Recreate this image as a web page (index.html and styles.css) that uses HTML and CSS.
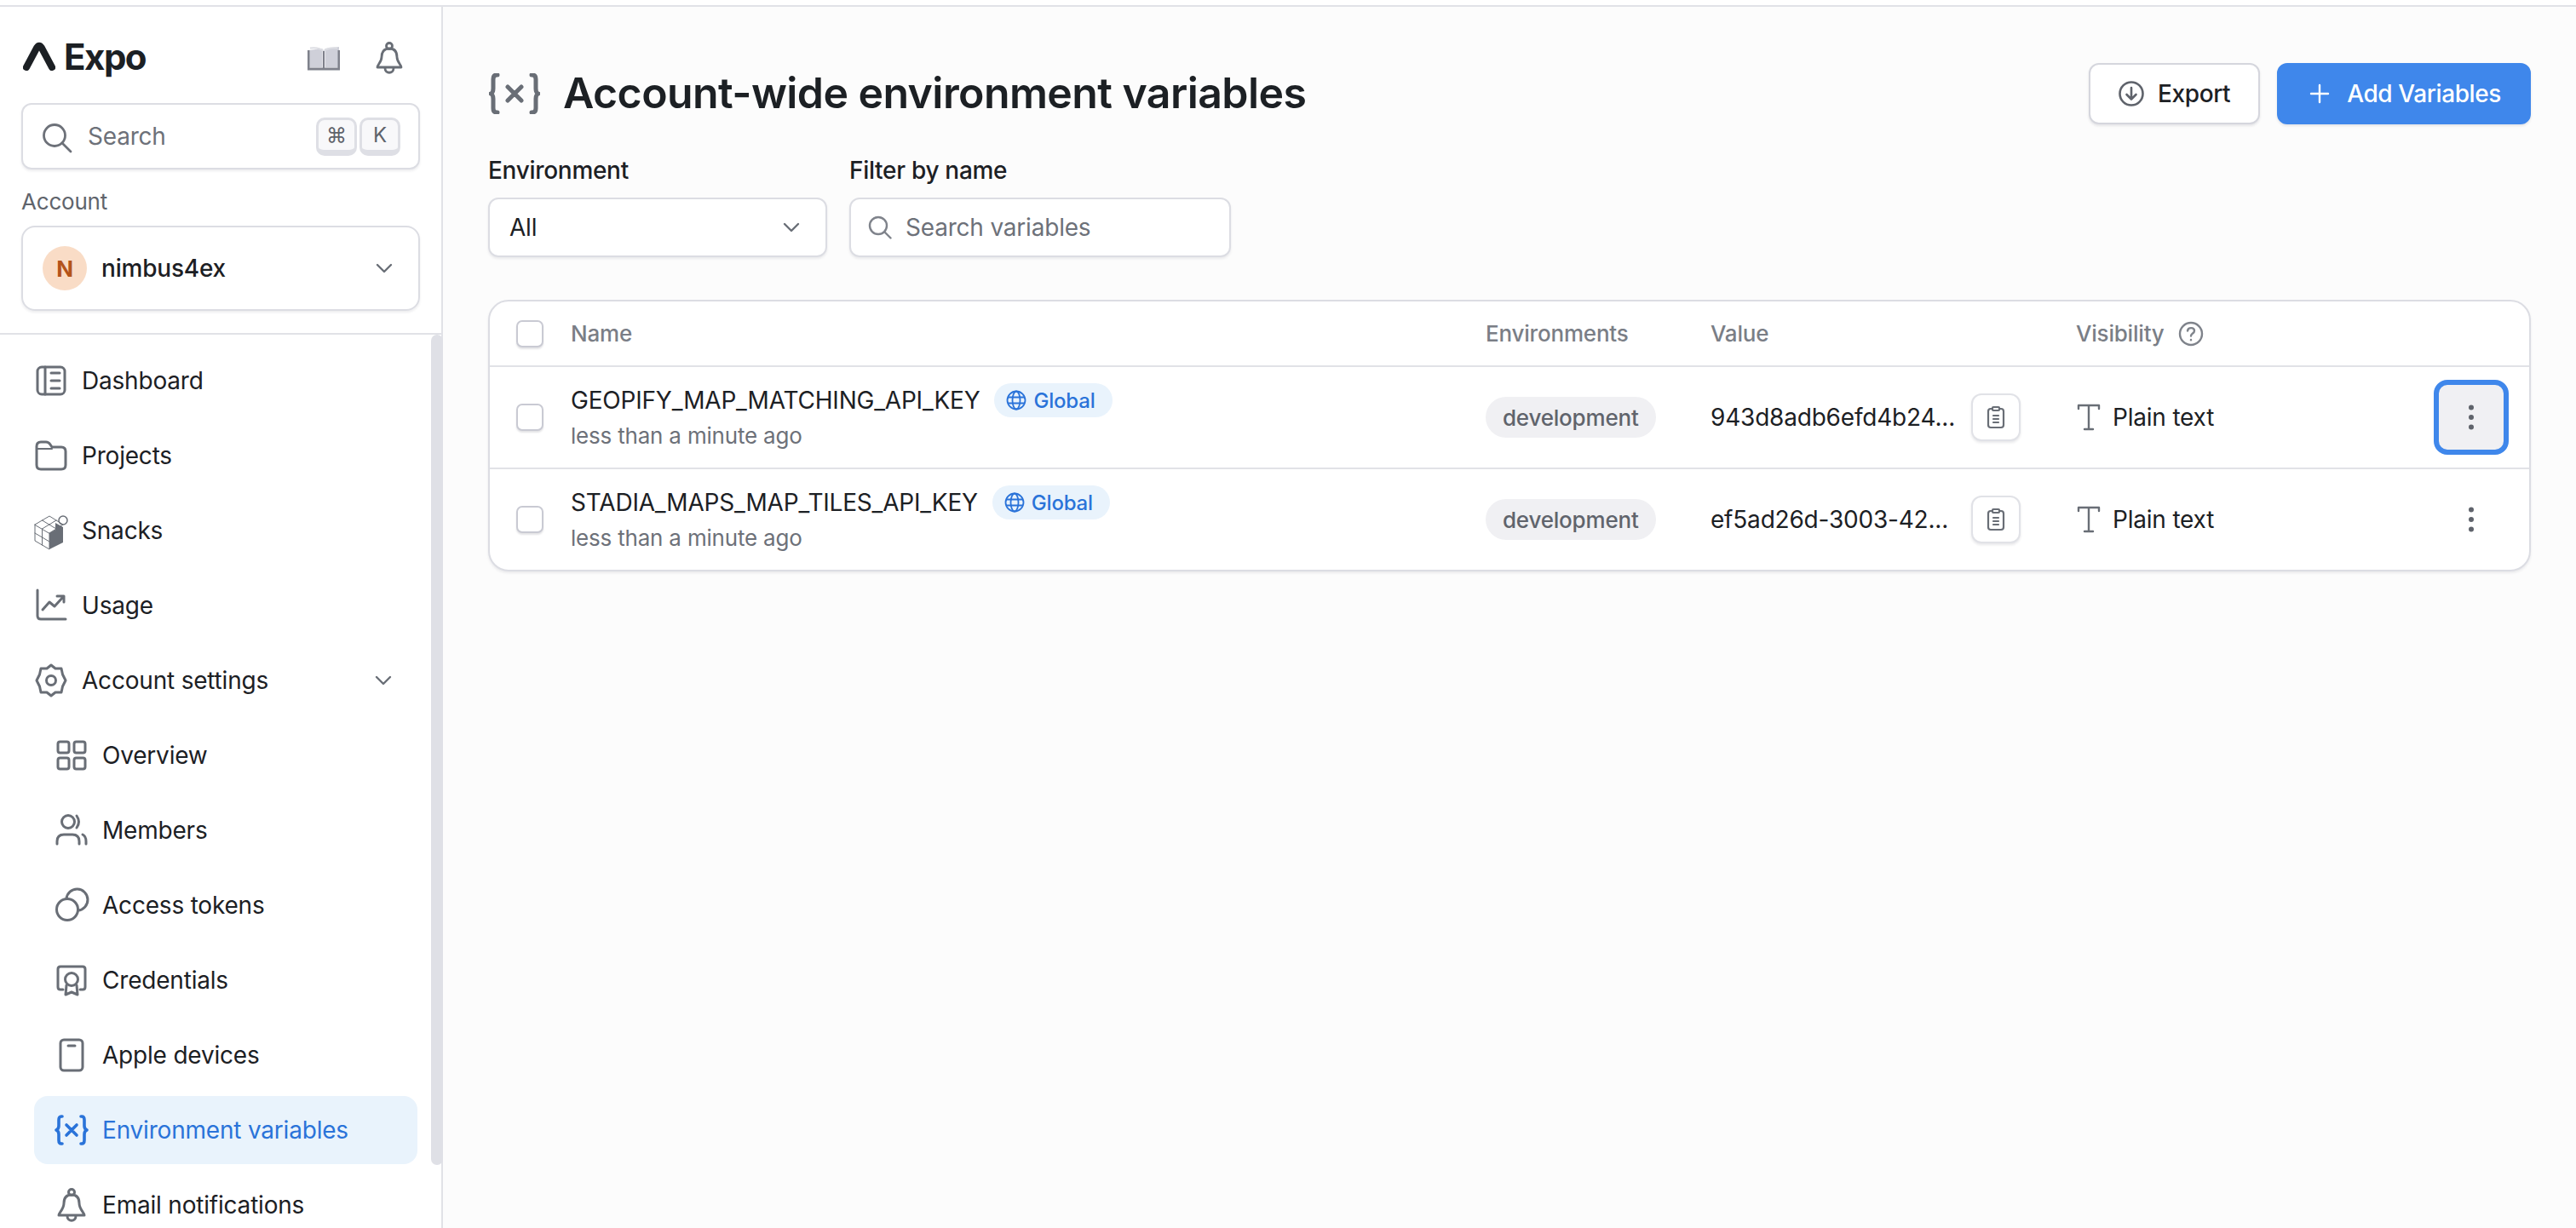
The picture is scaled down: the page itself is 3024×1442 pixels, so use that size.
FILE: index.html
```html
<!DOCTYPE html>
<html>
<head>
<meta charset="utf-8">
<title>Account-wide environment variables</title>
<link rel="stylesheet" href="styles.css">
</head>
<body>
<div class="app">

<div class="sidebar">
	<div class="side-head">
		<div class="brand">
			<div class="logo">
				<svg width="38" height="34" viewBox="0 0 38 34"><path d="M4 30 16.500 6.500Q19 3 21.500 6.500L34 30" fill="none" stroke="#1c2024" stroke-width="8" stroke-linecap="round" stroke-linejoin="round"/></svg>
				<span>Expo</span>
			</div>
			<div class="brand-icons">
				<svg width="38" height="30" viewBox="0 0 38 30"><path d="M1 6 17.500 4V26L1 26Z" fill="#cfd0d9"/><path d="M20.500 4 37 2V26H20.500Z" fill="#cfd0d9"/><path d="M1 6V28H37V6" fill="none" stroke="#7f818b" stroke-width="3"/><path d="M3 3.500Q13 2 19 7 25 2 35 3.500" fill="none" stroke="#dcdde3" stroke-width="2"/><path d="M19 7V27" stroke="#7f818b" stroke-width="2"/></svg>
				<svg width="32" height="38" viewBox="0 0 32 38" fill="none" stroke="#696e76" stroke-width="2.800" stroke-linecap="round" stroke-linejoin="round"><circle cx="16" cy="5" r="3.500"/><path d="M16 8C9 8 7 13 7 18 7 24 2 27 2 30H30C30 27 25 24 25 18 25 13 23 8 16 8Z"/><path d="M11 31C11 38 21 38 21 31"/></svg>
			</div>
		</div>
		<div class="search">
			<svg class="search-ico" width="36" height="36" viewBox="0 0 36 36" fill="none" stroke="#6d7179" stroke-width="2.800" stroke-linecap="round"><circle cx="15" cy="15" r="12.500"/><path d="M24 24 34 34"/></svg>
			<span class="search-text">Search</span>
			<span class="kbd">⌘</span>
			<span class="kbd">K</span>
		</div>
		<div class="side-label">Account</div>
		<div class="account">
			<span class="avatar">N</span>
			<span class="account-name">nimbus4ex</span>
			<svg class="chev" width="24" height="24" viewBox="0 0 24 24" fill="none" stroke="#696e76" stroke-width="2.400" stroke-linecap="round" stroke-linejoin="round"><path d="M4 8 12 16 20 8"/></svg>
		</div>
	</div>

	<div class="nav">
		<div class="item">
			<svg class="ico" viewBox="0 0 40 40"><rect x="4" y="4" width="32" height="32" rx="5"/><path d="M13 4V36M20 11H30M20 20H30M20 29H30"/></svg>
			Dashboard
		</div>
		<div class="item">
			<svg class="ico" viewBox="0 0 40 40"><path d="M3 9Q3 4 8 4H14Q17 4 19 7L21 10H32Q37 10 37 15V31Q37 36 32 36H8Q3 36 3 31Z"/><path d="M3 12H21" stroke-width="2"/></svg>
			Projects
		</div>
		<div class="item">
			<svg class="ico" viewBox="0 0 40 40"><g stroke-width="1"><path d="M1 13 18 3 34 13 18 23ZM1 13V32L18 42V23M9.500 8 26 18M26 8 9.500 18M1 23 18 33M9.500 18V37"/></g><path d="M18 23 25 19V11L34 16V34L18 42Z" fill="#696e76" stroke="none"/><circle cx="34" cy="8" r="5" stroke-width="1.500"/></svg>
			Snacks
		</div>
		<div class="item">
			<svg class="ico" viewBox="0 0 40 40"><path d="M4 2V32Q4 36 8 36H37M10 25 18 16 24 21 35 9M27 9H35V16"/></svg>
			Usage
		</div>
		<div class="item">
			<svg class="ico" viewBox="0 0 40 40"><circle cx="20" cy="20" r="5.500"/><path d="M20 2 25 6 32 6 33.500 13 37 20 33.500 27 32 34 25 34 20 38 15 34 8 34 6.500 27 3 20 6.500 13 8 6 15 6Z"/></svg>
			Account settings
			<svg class="chev" width="24" height="24" viewBox="0 0 24 24" fill="none" stroke="#696e76" stroke-width="2.400" stroke-linecap="round" stroke-linejoin="round"><path d="M4 8 12 16 20 8"/></svg>
		</div>
		<div class="item sub">
			<svg class="ico" viewBox="0 0 40 40"><rect x="4" y="4" width="13" height="13" rx="2.500"/><rect x="23" y="4" width="13" height="13" rx="2.500"/><rect x="4" y="23" width="13" height="13" rx="2.500"/><rect x="23" y="23" width="13" height="13" rx="2.500"/></svg>
			Overview
		</div>
		<div class="item sub">
			<svg class="ico" viewBox="0 0 40 40"><circle cx="16" cy="10" r="7.500"/><path d="M3 36V33Q3 25 11 25H21Q29 25 29 33V36M26 3Q31 10 26 17M33 25Q37 27 37 33V36"/></svg>
			Members
		</div>
		<div class="item sub">
			<svg class="ico" viewBox="0 0 40 40"><circle cx="15" cy="25" r="12.500"/><path d="M14 12.500A12.500 12.500 0 1 1 27.500 26"/></svg>
			Access tokens
		</div>
		<div class="item sub">
			<svg class="ico" viewBox="0 0 40 40"><path d="M10 31H7Q4 31 4 28V7Q4 4 7 4H33Q36 4 36 7V28Q36 31 33 31H30"/><circle cx="20" cy="19" r="7.500"/><path d="M14 26 13 37 20 34 27 37 26 26"/></svg>
			Credentials
		</div>
		<div class="item sub">
			<svg class="ico" viewBox="0 0 40 40"><rect x="7" y="2" width="26" height="36" rx="4"/><path d="M16 9H24"/></svg>
			Apple devices
		</div>
		<div class="item sub active">
			<svg class="ico" viewBox="0 0 40 40"><path d="M9 4H8Q5 4 5 8V15Q5 19 2 20 5 21 5 25V32Q5 36 8 36H9M31 4H32Q35 4 35 8V15Q35 19 38 20 35 21 35 25V32Q35 36 32 36H31M14 14 26 26M26 14 14 26"/></svg>
			Environment variables
		</div>
		<div class="item sub">
			<svg class="ico" viewBox="0 0 40 40"><circle cx="20" cy="5" r="3.500"/><path d="M20 8C13 8 11 13 11 18 11 25 5 29 5 32H35C35 29 29 25 29 18 29 13 27 8 20 8ZM15 33C15 40 25 40 25 33"/></svg>
			Email notifications
		</div>
	</div>
	<div class="scrollbar"></div>
</div>

<div class="main">
	<div class="page-head">
		<svg class="title-ico" width="60" height="48" viewBox="0 0 60 48" fill="none" stroke="#696e76" stroke-width="5" stroke-linecap="round" stroke-linejoin="round"><path d="M10 2H9Q5 2 5 7V18Q5 23 2 24 5 25 5 30V41Q5 46 9 46H10M50 2H51Q55 2 55 7V18Q55 23 58 24 55 25 55 30V41Q55 46 51 46H50M22 16 38 32M38 16 22 32"/></svg>
		<h1>Account-wide environment variables</h1>
		<div class="actions">
			<div class="btn">
				<svg width="30" height="30" viewBox="0 0 30 30" fill="none" stroke="#5f636b" stroke-width="2.600" stroke-linecap="round" stroke-linejoin="round"><circle cx="15" cy="15" r="13.500"/><path d="M15 8V21M9.500 16 15 21.500 20.500 16"/></svg>
				Export
			</div>
			<div class="btn primary">
				<svg width="24" height="24" viewBox="0 0 24 24" fill="none" stroke="#fff" stroke-width="2.400" stroke-linecap="round"><path d="M12 2V22M2 12H22"/></svg>
				Add Variables
			</div>
		</div>
	</div>

	<div class="filters">
		<div class="field env-field">
			<label>Environment</label>
			<div class="control">
				<span class="control-text">All</span>
				<svg class="chev" width="24" height="24" viewBox="0 0 24 24" fill="none" stroke="#696e76" stroke-width="2.400" stroke-linecap="round" stroke-linejoin="round"><path d="M4 8 12 16 20 8"/></svg>
			</div>
		</div>
		<div class="field name-field">
			<label>Filter by name</label>
			<div class="control">
				<svg width="28" height="28" viewBox="0 0 28 28" fill="none" stroke="#7f838b" stroke-width="2.400" stroke-linecap="round"><circle cx="12" cy="12" r="10"/><path d="M19.500 19.500 26.500 26.500"/></svg>
				<span class="placeholder">Search variables</span>
			</div>
		</div>
	</div>

	<div class="card">
		<div class="row head">
			<div class="cell-check"><span class="check"></span></div>
			<div>Name</div>
			<div>Environments</div>
			<div>Value</div>
			<div class="vis">Visibility
				<svg width="30" height="30" viewBox="0 0 30 30" fill="none" stroke="#7f838b" stroke-width="2.400" stroke-linecap="round"><circle cx="15" cy="15" r="13"/><path d="M11 11.500C11.500 7 19 7 19 11.500 19 14.500 15 14.500 15 17.500"/><path d="M15 22V22.200"/></svg>
			</div>
			<div></div>
		</div>

		<div class="row">
			<div class="cell-check"><span class="check"></span></div>
			<div class="name-cell">
				<div class="name-line">
					<span class="var-name">GEOPIFY_MAP_MATCHING_API_KEY</span>
					<span class="badge">
						<svg width="24" height="24" viewBox="0 0 24 24" fill="none" stroke="#2a73d9" stroke-width="1.800"><circle cx="12" cy="12" r="10.500"/><ellipse cx="12" cy="12" rx="4.500" ry="10.500"/><path d="M2 8.500H22M2 15.500H22"/></svg>
						Global
					</span>
				</div>
				<div class="updated">less than a minute ago</div>
			</div>
			<div><span class="pill">development</span></div>
			<div class="value">
				<span class="value-text">943d8adb6efd4b24...</span>
				<span class="copy">
					<svg width="22" height="28" viewBox="0 0 22 28" fill="none" stroke="#696e76" stroke-width="2.200" stroke-linecap="round" stroke-linejoin="round"><path d="M7 4H5Q2 4 2 7V23Q2 26 5 26H17Q20 26 20 23V7Q20 4 17 4H15"/><rect x="7" y="2" width="8" height="4" rx="1"/><path d="M8 12H14M8 16H14M8 20H14"/></svg>
				</span>
			</div>
			<div class="plain">
				<svg width="30" height="32" viewBox="0 0 30 32" fill="none" stroke="#696e76" stroke-width="2.400" stroke-linecap="round" stroke-linejoin="round"><path d="M3 6V2H27V6M15 2V30M10 30H20"/></svg>
				Plain text
			</div>
			<div class="cell-menu">
				<span class="menu focus"><svg width="8" height="30" viewBox="0 0 8 30" fill="#5f636b"><circle cx="4" cy="3.500" r="3"/><circle cx="4" cy="15" r="3"/><circle cx="4" cy="26.500" r="3"/></svg></span>
			</div>
		</div>

		<div class="row last">
			<div class="cell-check"><span class="check"></span></div>
			<div class="name-cell">
				<div class="name-line">
					<span class="var-name">STADIA_MAPS_MAP_TILES_API_KEY</span>
					<span class="badge">
						<svg width="24" height="24" viewBox="0 0 24 24" fill="none" stroke="#2a73d9" stroke-width="1.800"><circle cx="12" cy="12" r="10.500"/><ellipse cx="12" cy="12" rx="4.500" ry="10.500"/><path d="M2 8.500H22M2 15.500H22"/></svg>
						Global
					</span>
				</div>
				<div class="updated">less than a minute ago</div>
			</div>
			<div><span class="pill">development</span></div>
			<div class="value">
				<span class="value-text">ef5ad26d-3003-42...</span>
				<span class="copy">
					<svg width="22" height="28" viewBox="0 0 22 28" fill="none" stroke="#696e76" stroke-width="2.200" stroke-linecap="round" stroke-linejoin="round"><path d="M7 4H5Q2 4 2 7V23Q2 26 5 26H17Q20 26 20 23V7Q20 4 17 4H15"/><rect x="7" y="2" width="8" height="4" rx="1"/><path d="M8 12H14M8 16H14M8 20H14"/></svg>
				</span>
			</div>
			<div class="plain">
				<svg width="30" height="32" viewBox="0 0 30 32" fill="none" stroke="#696e76" stroke-width="2.400" stroke-linecap="round" stroke-linejoin="round"><path d="M3 6V2H27V6M15 2V30M10 30H20"/></svg>
				Plain text
			</div>
			<div class="cell-menu">
				<span class="menu"><svg width="8" height="30" viewBox="0 0 8 30" fill="#5f636b"><circle cx="4" cy="3.500" r="3"/><circle cx="4" cy="15" r="3"/><circle cx="4" cy="26.500" r="3"/></svg></span>
			</div>
		</div>
	</div>
</div>

</div>
</body>
</html>
```

FILE: styles.css
```css
* {
	box-sizing: border-box;
}

html, body {
	margin: 0;
	height: 100%;
	overflow: hidden;
	background: #fff;
}

body {
	padding-top: 6px;
	font-family: Inter, "Noto Sans", sans-serif;
	font-size: 28px;
	letter-spacing: -.2px;
	color: #1c2024;
}

.app {
	display: flex;
	height: 100%;
	border-top: 2px solid #e1e2e7;
}

/* sidebar */

.sidebar {
	position: relative;
	width: 520px;
	flex: none;
	display: flex;
	flex-direction: column;
	background: #fff;
	border-right: 2px solid #e1e2e7;
}

.side-head {
	height: 385px;
	flex: none;
	padding: 0 25px;
	border-bottom: 2px solid #e1e2e7;
}

.brand {
	display: flex;
	align-items: center;
	justify-content: space-between;
	height: 113px;
	padding: 3px 20px 0 2px;
}

.logo {
	display: flex;
	align-items: center;
	gap: 10px;
	font-size: 42px;
	font-weight: 700;
	letter-spacing: -1.500px;
}

.brand-icons {
	display: flex;
	align-items: center;
	gap: 42px;
	margin-top: 4px;
}

.search {
	display: flex;
	align-items: center;
	height: 78px;
	padding: 0 21px 0 22px;
	background: #fff;
	border: 2px solid #dcdde3;
	border-radius: 12px;
	box-shadow: 0 2px 3px rgba(30, 30, 50, .08);
	color: #6d7179;
}

.search-ico {
	margin-top: 4px;
}

.search-text {
	flex: 1;
	margin-left: 18px;
	font-size: 28px;
}

.kbd {
	display: flex;
	align-items: center;
	justify-content: center;
	width: 48px;
	height: 45px;
	margin-left: 3px;
	background: #f8f8fa;
	border: 3px solid #dedfe5;
	border-bottom-width: 7px;
	border-radius: 10px;
	font-size: 24px;
	color: #5f636b;
}

.side-label {
	margin-top: 20px;
	height: 36px;
	line-height: 36px;
	font-size: 26px;
	color: #60646c;
}

.account {
	display: flex;
	align-items: center;
	height: 100px;
	margin-top: 10px;
	padding: 0 28px 0 23px;
	border: 2px solid #dcdde3;
	border-radius: 16px;
	box-shadow: 0 2px 3px rgba(30, 30, 50, .08);
}

.avatar {
	display: flex;
	align-items: center;
	justify-content: center;
	width: 52px;
	height: 52px;
	border-radius: 50%;
	background: #f9dcc6;
	color: #b4531a;
	font-size: 26px;
	font-weight: 700;
}

.account-name {
	flex: 1;
	margin-left: 17px;
	font-size: 28px;
	font-weight: 500;
}

.nav {
	flex: 1;
	display: flex;
	flex-direction: column;
	gap: 8px;
	padding: 14px 28px 0 40px;
	overflow: hidden;
}

.item {
	display: flex;
	flex: none;
	align-items: center;
	gap: 16px;
	height: 80px;
	border-radius: 16px;
	font-size: 28px;
	color: #1c2024;
}

.item .chev {
	margin-left: auto;
	margin-right: 28px;
}

.sub {
	padding-left: 24px;
}

.ico {
	width: 40px;
	height: 40px;
	flex: none;
	overflow: visible;
	fill: none;
	stroke: #696e76;
	stroke-width: 3;
	stroke-linecap: round;
	stroke-linejoin: round;
}

.active {
	background: #e9f3fc;
	color: #2a73d9;
}

.active .ico {
	stroke: #2a73d9;
	stroke-width: 3.600;
}

.scrollbar {
	position: absolute;
	right: -2px;
	top: 385px;
	width: 14px;
	height: 975px;
	border-radius: 7px;
	background: #dfe0e6;
}

/* main */

.main {
	flex: 1;
	padding: 66px 53px 0;
	background: #fcfcfc;
}

.page-head {
	display: flex;
	align-items: center;
	height: 72px;
}

.title-ico {
	margin-left: 1px;
}

h1 {
	margin: 0 0 2px 27px;
	font-size: 50px;
	font-weight: 600;
	letter-spacing: -.58px;
}

.actions {
	display: flex;
	gap: 20px;
	margin-left: auto;
}

.btn {
	display: flex;
	align-items: center;
	gap: 16px;
	height: 72px;
	padding: 0 33px;
	background: #fff;
	border: 2px solid #d5d6dd;
	border-radius: 12px;
	box-shadow: 0 2px 3px rgba(30, 30, 50, .1);
	font-size: 28px;
	font-weight: 500;
	letter-spacing: -.4px;
}

.primary {
	padding: 0 33px 0 36px;
	background: #3f87eb;
	border-color: #3f87eb;
	color: #fff;
	gap: 20px;
}

.filters {
	display: flex;
	gap: 26px;
	margin-top: 40px;
}

.field label {
	display: block;
	height: 28px;
	line-height: 28px;
	margin-bottom: 18px;
	font-size: 28px;
	font-weight: 500;
	letter-spacing: -.3px;
}

.env-field {
	width: 398px;
}

.name-field {
	width: 448px;
}

.control {
	display: flex;
	align-items: center;
	height: 70px;
	padding: 0 28px 0 23px;
	background: #fff;
	border: 2px solid #dcdde3;
	border-radius: 12px;
	box-shadow: 0 2px 3px rgba(30, 30, 50, .08);
}

.control-text {
	flex: 1;
}

.placeholder {
	margin-left: 16px;
	color: #6d7179;
}

.name-field .control {
	padding-left: 20px;
}

.card {
	margin-top: 50px;
	background: #fff;
	border: 2px solid #dcdde3;
	border-radius: 24px;
	box-shadow: 0 2px 3px rgba(30, 30, 50, .08);
}

.row {
	display: grid;
	grid-template-columns: 95px 1074px 264px 429px 1fr 130px;
	align-items: center;
	height: 120px;
	border-bottom: 2px solid #e1e2e7;
}

.head {
	height: 77px;
	font-size: 26px;
	font-weight: 500;
	color: #7a7e86;
}

.last {
	height: 118px;
	border-bottom: 0;
}

.cell-check {
	padding-left: 31px;
}

.check {
	display: block;
	width: 32px;
	height: 32px;
	background: #fff;
	border: 2px solid #c9cad3;
	border-radius: 7px;
	box-shadow: 0 2px 2px rgba(30, 30, 50, .12);
}

.vis {
	display: flex;
	align-items: center;
	gap: 16px;
}

.name-cell {
	padding-bottom: 3px;
}

.name-line {
	display: flex;
	align-items: center;
	gap: 17px;
}

.badge {
	display: flex;
	align-items: center;
	gap: 8px;
	height: 40px;
	padding: 0 20px 0 14px;
	background: #e9f3fc;
	border-radius: 20px;
	color: #2a73d9;
	font-size: 24px;
	font-weight: 500;
}

.updated {
	margin-top: 6px;
	font-size: 26px;
	color: #6d7179;
}

.pill {
	display: inline-flex;
	align-items: center;
	height: 48px;
	padding: 0 20px;
	background: #f0f0f3;
	border-radius: 24px;
	font-size: 26px;
	font-weight: 500;
	color: #60646c;
}

.value {
	display: flex;
	align-items: center;
	justify-content: space-between;
	padding-right: 65px;
}

.value-text {
	white-space: nowrap;
}

.copy {
	display: flex;
	align-items: center;
	justify-content: center;
	width: 58px;
	height: 56px;
	background: #fff;
	border: 2px solid #e1e2e7;
	border-radius: 12px;
	box-shadow: 0 2px 3px rgba(30, 30, 50, .1);
}

.plain {
	display: flex;
	align-items: center;
	gap: 13px;
}

.cell-menu {
	display: flex;
	justify-content: flex-end;
	padding-right: 24px;
}

.menu {
	display: flex;
	align-items: center;
	justify-content: center;
	width: 88px;
	height: 88px;
	border-radius: 16px;
}

.focus {
	background: #f0f0f3;
	border: 6px solid #3f87eb;
}
```
